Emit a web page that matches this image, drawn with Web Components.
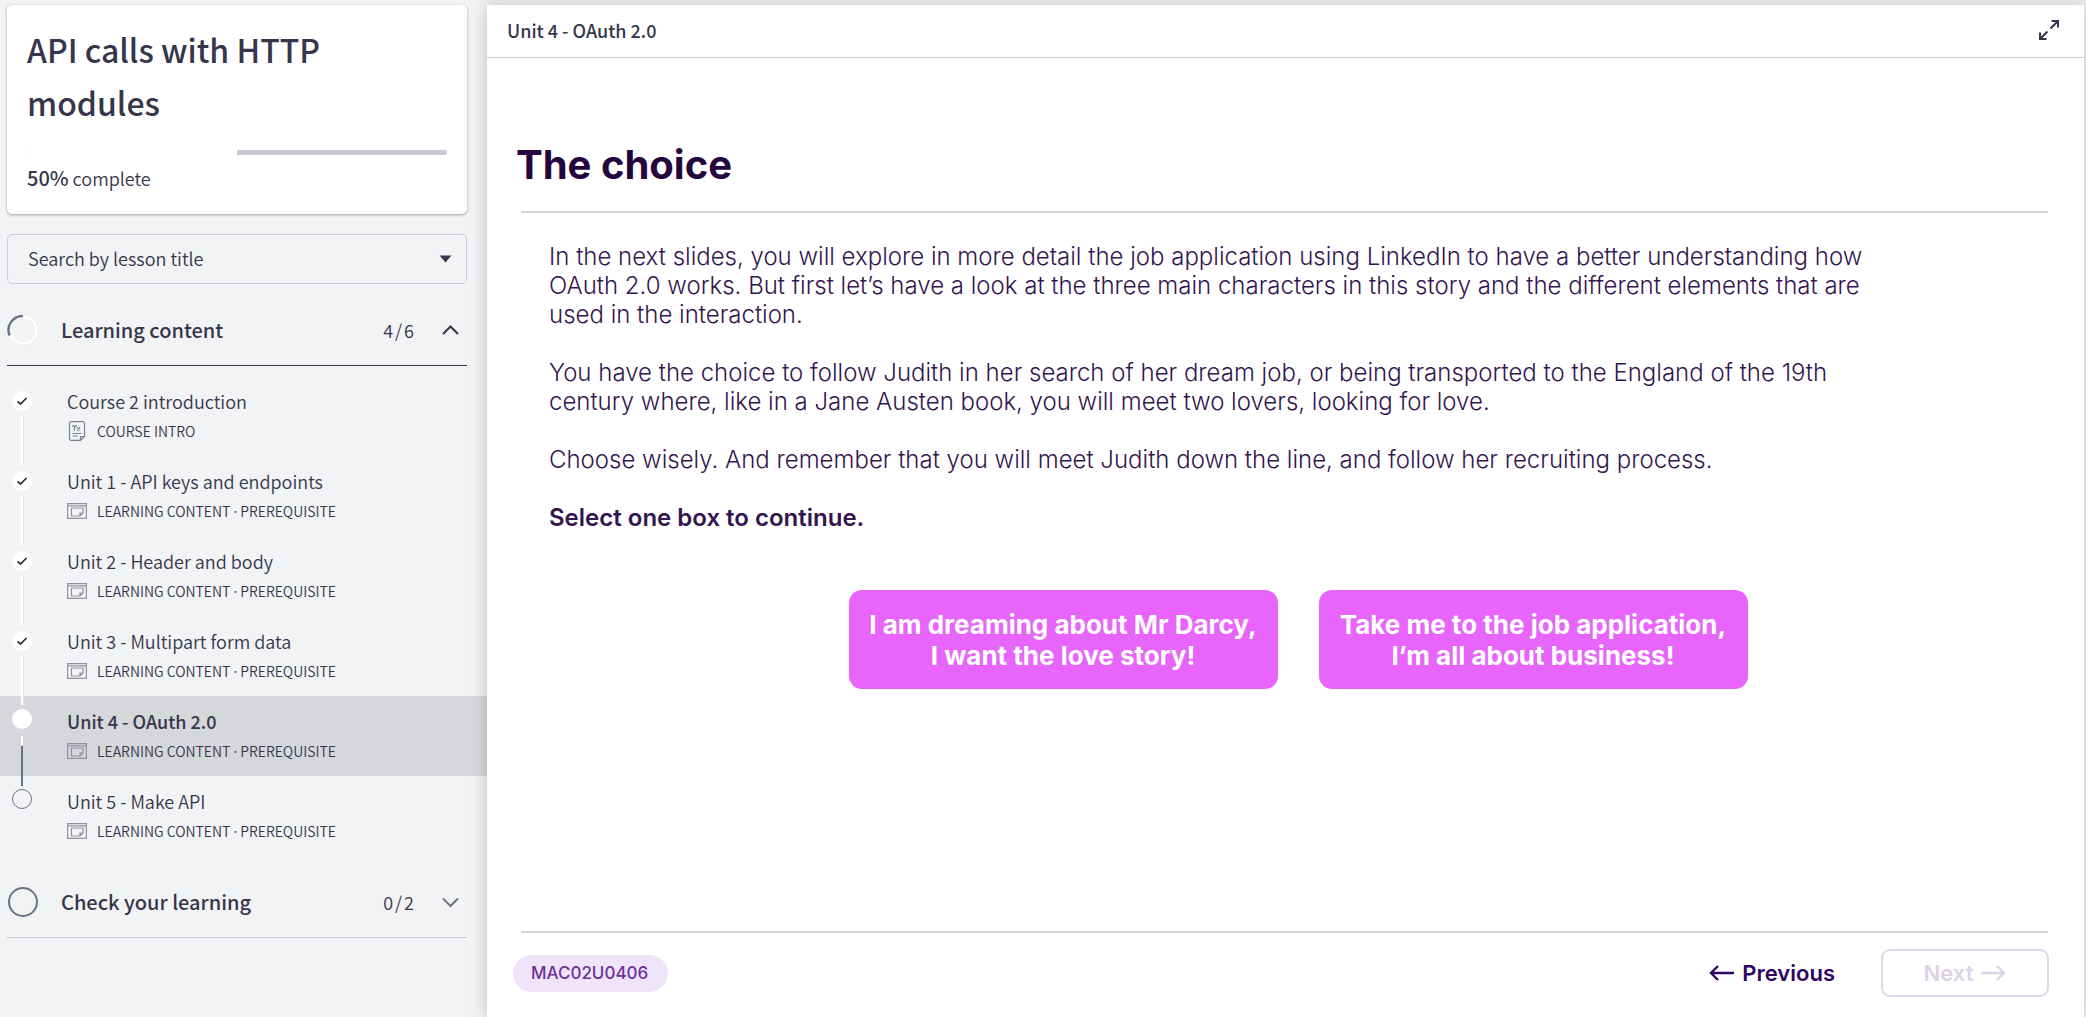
<!DOCTYPE html>
<html lang="en">
<head>
<meta charset="utf-8">
<title>API calls with HTTP modules</title>
<style>
  html, body { margin: 0; height: 100%; }
  body {
    background: #f2f3f5;
    color: #35364c;
    font-family: "Noto Sans CJK JP", "Noto Sans", sans-serif;
  }
</style>
</head>
<body>
<course-app>
  <course-sidebar slot="side">
    <course-card percent="50">API calls with HTTP modules</course-card>
    <lesson-search></lesson-search>
    <lesson-section heading="Learning content" count="4/6" state="partial" open>
      <lesson-item state="done" kind="text" meta="COURSE INTRO">Course 2 introduction</lesson-item>
      <lesson-item state="done" kind="slide" meta="LEARNING CONTENT" extra="PREREQUISITE">Unit 1 - API keys and endpoints</lesson-item>
      <lesson-item state="done" kind="slide" meta="LEARNING CONTENT" extra="PREREQUISITE">Unit 2 - Header and body</lesson-item>
      <lesson-item state="done" kind="slide" meta="LEARNING CONTENT" extra="PREREQUISITE">Unit 3 - Multipart form data</lesson-item>
      <lesson-item state="current" kind="slide" meta="LEARNING CONTENT" extra="PREREQUISITE">Unit 4 - OAuth 2.0</lesson-item>
      <lesson-item state="todo" kind="slide" meta="LEARNING CONTENT" extra="PREREQUISITE">Unit 5 - Make API</lesson-item>
    </lesson-section>
    <lesson-section heading="Check your learning" count="0/2" state="empty"></lesson-section>
  </course-sidebar>
  <lesson-player heading="Unit 4 - OAuth 2.0">
    <lesson-slide heading="The choice" code="MAC02U0406">
      <slide-text>
        <p>In the next slides, you will explore in more detail the job application using LinkedIn to have a better understanding how OAuth 2.0 works. But first let’s have a look at the three main characters in this story and the different elements that are used in the interaction.</p>
        <p>You have the choice to follow Judith in her search of her dream job, or being transported to the England of the 19th century where, like in a Jane Austen book, you will meet two lovers, looking for love.</p>
        <p>Choose wisely. And remember that you will meet Judith down the line, and follow her recruiting process.</p>
        <p style="font-weight:600">Select one box to continue.</p>
      </slide-text>
      <choice-button slot="choices">I am dreaming about Mr Darcy,<br>I want the love story!</choice-button>
      <choice-button slot="choices">Take me to the job application,<br>I’m all about business!</choice-button>
    </lesson-slide>
  </lesson-player>
</course-app>

<script>
  class BaseElement extends HTMLElement {
    connectedCallback() {
      if (this.shadowRoot) return;
      this.attachShadow({ mode: "open" }).innerHTML =
        "<style>*{box-sizing:border-box}[hidden]{display:none}</style>" + this.render();
    }
    attr(name) { return this.getAttribute(name) || ""; }
  }

  customElements.define("course-app", class extends BaseElement {
    render() {
      return `
      <style>
        :host { display: flex; min-height: 100vh; overflow: hidden; }
        .side { flex: 0 0 487px; display: flex; }
        .main { flex: 1; min-width: 0; display: flex; padding: 5px 2px 0 0; }
      </style>
      <div class="side"><slot name="side"></slot></div>
      <div class="main"><slot></slot></div>`;
    }
  });

  customElements.define("course-sidebar", class extends BaseElement {
    render() {
      return `
      <style>
        :host { display: block; flex: 1; padding-top: 5px; }
      </style>
      <slot></slot>`;
    }
  });

  customElements.define("course-card", class extends BaseElement {
    render() {
      const p = this.attr("percent");
      return `
      <style>
        :host { display: block; margin: 0 20px 20px 7px; padding: 18px 20px 21px; background: #fff;
          border-radius: 5px; box-shadow: 0 1px 3px rgba(0,0,0,.35); }
        h1 { margin: 0 0 21px; font-size: 32px; line-height: 53px; font-weight: 500; }
        .bar { height: 5px; border-radius: 3px; overflow: hidden; background: #c9cad6; }
        .bar div { height: 100%; width: ${p}%; background: #fff; }
        p { margin: 8px 0 0; font-size: 18px; line-height: 30px; font-weight: 350; }
        b { font-weight: 500; font-size: 20px; }
      </style>
      <h1><slot></slot></h1>
      <div class="bar"><div></div></div>
      <p><b>${p}%</b> complete</p>`;
    }
  });

  customElements.define("lesson-search", class extends BaseElement {
    render() {
      return `
      <style>
        :host { display: grid; margin: 0 20px 11px 7px; align-items: center; }
        select, svg { grid-area: 1 / 1; }
        select { appearance: none; width: 100%; height: 50px; padding: 0 20px 2px; border: 1px solid #c9cad6;
          border-radius: 5px; background: transparent; color: inherit; font: 350 18px/46px "Noto Sans CJK JP", sans-serif; }
        svg { justify-self: end; margin-right: 15px; pointer-events: none; }
      </style>
      <select aria-label="Search by lesson title"><option>Search by lesson title</option></select>
      <svg width="13" height="8" viewBox="0 0 13 8"><path d="M.5 .5h12L6.500 7.500z" fill="#35364c"/></svg>`;
    }
  });

  customElements.define("lesson-section", class extends BaseElement {
    render() {
      const open = this.hasAttribute("open");
      const ring = this.attr("state") === "partial"
        ? `<circle cx="16" cy="16" r="14.500" fill="none" stroke="#c9cad6" stroke-width="1" stroke-dasharray="2 2"/>
           <circle cx="16" cy="16" r="13.500" fill="none" stroke="#fff" stroke-width="2.500"/>
           <path d="M16 2A14 14 0 0 0 2.700 21.500" fill="none" stroke="#6e7287" stroke-width="2.500"/>`
        : `<circle cx="16" cy="16" r="14" fill="none" stroke="#6e7287" stroke-width="2"/>`;
      const chevron = open ? "M1 9 8.500 1.500 16 9" : "M1 1.500 8.500 9 16 1.500";
      const count = this.attr("count").replace("/", "<i>/</i>");
      return `
      <style>
        :host { display: block; }
        h2 { margin: 0 20px 0 7px; border-bottom: 1px solid ${open ? "#35364c" : "#c5c7cf"}; font: inherit; }
        button { display: flex; align-items: center; width: 100%; height: 70px; padding: 0 8px 0 0; border: 0;
          background: none; color: inherit; font: 500 20px/30px "Noto Sans CJK JP", sans-serif; text-align: left; }
        .name { flex: 1; margin-left: 22px; }
        .count { font-size: 18px; font-weight: 350; margin-right: 28px; }
        i { font-style: normal; margin: 0 2px; }
        .list { padding: 10px 0 11px; }
      </style>
      <h2><button aria-expanded="${open}">
        <svg width="32" height="32" viewBox="0 0 32 32">${ring}</svg>
        <span class="name">${this.attr("heading")}</span>
        <span class="count">${count}</span>
        <svg width="17" height="11" viewBox="0 0 17 11"><path d="${chevron}" fill="none" stroke="${open ? "#35364c" : "#6e7287"}" stroke-width="2"/></svg>
      </button></h2>
      ${open ? '<div class="list" role="list"><slot></slot></div>' : ""}`;
    }
  });

  const KIND_ICONS = {
    text: `<svg width="20" height="20" viewBox="0 0 20 20" fill="none" stroke="#7b7e92" stroke-width="1.200">
      <path d="M4 .7h12a1.500 1.500 0 0 1 1.500 1.500V15.500L13.500 19.300H4a1.500 1.500 0 0 1-1.500-1.500V2.200A1.500 1.500 0 0 1 4 .7zM13.500 19V15.500H17.500M5.500 12.500h9M5.500 15h5.500M5 4.800h5M7.500 4.800v5M10 6.200l3.200 3.600M13.200 6.200L10 9.800"/></svg>`,
    slide: `<svg width="20" height="20" viewBox="0 0 20 20" fill="none" stroke="#8f91a1" stroke-width="1.200">
      <path d="M.6 2.600h18.800v14.800H.6zM.6 4.800h18.800M4.500 7h11.500v5l-3 3H4.500zM13 15v-3h3"/></svg>`
  };

  customElements.define("lesson-item", class extends BaseElement {
    render() {
      const state = this.attr("state");
      const marks = {
        done: `<circle cx="22" cy="25" r="10" fill="#fff"/>
          <path d="M17.500 25.300l3 2.700 6-6" fill="none" stroke="#2b2c3a" stroke-width="1.700"/>
          <path d="M22.500 40V89" stroke="#e3e4e8" stroke-width="3"/><path d="M22 40V89" stroke="#fff" stroke-width="2"/>`,
        current: `<circle cx="22" cy="23" r="10" fill="#fff"/><path d="M22 40V49" stroke="#fff" stroke-width="2"/>
          <path d="M22 50V90" stroke="#6e7287" stroke-width="2"/>`,
        todo: `<circle cx="22" cy="23" r="9.500" fill="none" stroke="#6e7287" stroke-width="1"/>`
      };
      const extra = this.attr("extra");
      return `
      <style>
        :host { display: block; ${state === "current" ? "background:#d6d7db;" : ""} }
        a { display: flex; height: 80px; color: inherit; text-decoration: none; }
        .track { flex: none; overflow: visible; position: relative; z-index: 1; }
        .text { padding: 11px 0 0 23px; }
        .name { font-size: 18px; line-height: 28px; font-weight: ${state === "current" ? 500 : 350}; }
        .meta { display: flex; align-items: center; margin-top: 6px; font-size: 14px; line-height: 20px; font-weight: 350; }
        .meta span { margin-left: 10px; }
        .meta .dot { margin: 0 1px; }
        .meta .extra { margin: 0; }
      </style>
      <a href="#" role="listitem" ${state === "current" ? 'aria-current="page"' : ""}>
        <svg class="track" width="44" height="80" viewBox="0 0 44 80">${marks[state]}</svg>
        <div class="text">
          <div class="name"><slot></slot></div>
          <div class="meta">${KIND_ICONS[this.attr("kind")]}<span>${this.attr("meta")}</span>${extra ? `<span class="dot">·</span><span class="extra">${extra}</span>` : ""}</div>
        </div>
      </a>`;
    }
  });

  customElements.define("lesson-player", class extends BaseElement {
    render() {
      return `
      <style>
        :host { display: flex; flex-direction: column; flex: 1; min-width: 0; background: #fff;
          box-shadow: 0 0 16px rgba(0,0,0,.22); position: relative; z-index: 2; }
        header { display: flex; align-items: center; justify-content: space-between; height: 53px;
          padding: 0 20px 2px; border-bottom: 1px solid #c9cad6; }
        h2 { margin: 0; font-size: 18px; line-height: 28px; font-weight: 500; }
        button { display: flex; padding: 4px; border: 0; background: none; }
      </style>
      <header><h2>${this.attr("heading")}</h2>
        <button aria-label="Full screen"><svg width="22" height="22" viewBox="0 0 22 22" fill="none" stroke="#35364c" stroke-width="2">
          <path d="M12.500 9.500 20 2M13.500 2H20V8.500M9.500 12.500 2 20M2 13.500V20H8.500"/></svg></button>
      </header>
      <slot></slot>`;
    }
  });

  customElements.define("lesson-slide", class extends BaseElement {
    render() {
      return `
      <style>
        :host { display: flex; flex-direction: column; flex: 1; padding: 78px 35px 20px 26px; font-family: Inter, sans-serif; color: #24053e; }
        h1 { margin: 0 0 0 3px; font-size: 40px; line-height: 58px; font-weight: 700; color: #24053e; }
        hr { width: auto; height: 2px; margin: 0 1px 0 8px; border: 0; background: #d9d3d8; align-self: stretch; }
        .top { margin-top: 17px; }
        .choices { display: flex; justify-content: center; gap: 41px; margin: 29px 2px 0 36px; }
        ::slotted(slide-text) { margin: 29px 0 0 36px; }
        .space { flex: 1; }
        footer { display: flex; align-items: center; margin-top: 16px; }
        .code { padding: 0 20px 0 18px; border-radius: 19px; background: #f0e4fb; color: #6d2f9c; font-size: 17px; line-height: 37px; font-weight: 500; margin-right: auto; }
        button { display: flex; align-items: center; gap: 8px; height: 48px; border: 0; background: none; color: #300462;
          font: 600 22px/28px Inter, sans-serif; padding: 0; }
        .next { justify-content: center; width: 168px; margin-left: 46px; border: 2px solid #dfd6e8; border-radius: 9px; color: #dcd3e6; }
      </style>
      <h1>${this.attr("heading")}</h1>
      <hr class="top">
      <slot></slot>
      <div class="choices"><slot name="choices"></slot></div>
      <div class="space"></div>
      <hr>
      <footer>
        <span class="code">${this.attr("code")}</span>
        <button><svg width="25" height="16" viewBox="0 0 25 16" fill="none" stroke="currentColor" stroke-width="2.400"><path d="M25 8H2M9 1 2 8l7 7"/></svg>Previous</button>
        <button class="next" disabled>Next<svg width="25" height="16" viewBox="0 0 25 16" fill="none" stroke="currentColor" stroke-width="2.400"><path d="M0 8H23M16 1l7 7-7 7"/></svg></button>
      </footer>`;
    }
  });

  customElements.define("slide-text", class extends BaseElement {
    render() {
      return `
      <style>
        :host { display: block; max-width: 1340px; font-size: 24px; line-height: 29px; font-weight: 300; color: #34154f; }
        ::slotted(p) { margin: 0 0 29px; }
      </style>
      <slot></slot>`;
    }
  });

  customElements.define("choice-button", class extends BaseElement {
    render() {
      return `
      <style>
        :host { display: block; }
        button { width: 429px; height: 99px; padding: 0; border: 0; border-radius: 13px; background: #e865fb; color: #fff;
          font: 700 26px/31px Inter, sans-serif; text-align: center; }
      </style>
      <button><slot></slot></button>`;
    }
  });
</script>
</body>
</html>
